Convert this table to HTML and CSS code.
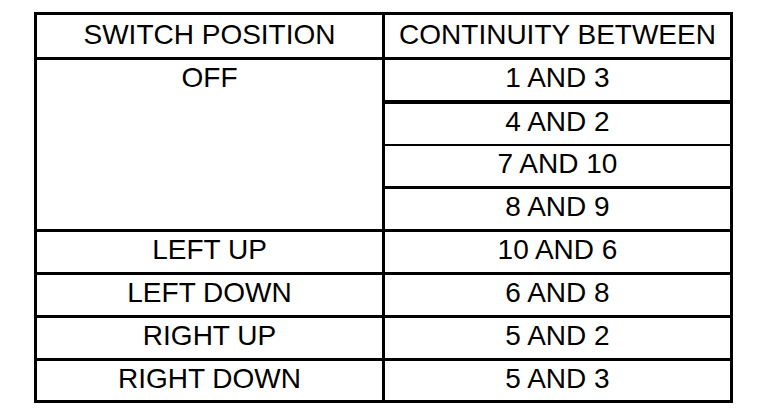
FILE: index.html
```html
<!DOCTYPE html>
<html>
<head>
<meta charset="utf-8">
<link rel="stylesheet" href="styles.css">
</head>
<body>
<div class="table">
  <div class="cell head">SWITCH POSITION</div>
  <div class="cell head">CONTINUITY BETWEEN</div>
  <div class="cell off"><div class="line">OFF</div></div>
  <div class="cell r1">1 AND 3</div>
  <div class="cell r2">4 AND 2</div>
  <div class="cell r3">7 AND 10</div>
  <div class="cell r4">8 AND 9</div>
  <div class="cell">LEFT UP</div>
  <div class="cell">10 AND 6</div>
  <div class="cell">LEFT DOWN</div>
  <div class="cell">6 AND 8</div>
  <div class="cell">RIGHT UP</div>
  <div class="cell">5 AND 2</div>
  <div class="cell">RIGHT DOWN</div>
  <div class="cell">5 AND 3</div>
</div>
</body>
</html>
```
FILE: styles.css
```css
html, body {
  margin: 0;
  padding: 0;
  background: #fff;
}
body {
  padding: 12px 0 0 34px;
  font-family: "Liberation Sans", Arial, sans-serif;
  font-size: 28px;
  color: #000;
}
.table {
  display: grid;
  width: 699px;
  box-sizing: border-box;
  grid-template-columns: 345px 345px;
  grid-template-rows: 42px 40px 41px 39px 40px 40px 40px 40px 39px;
  gap: 3px;
  padding: 3px;
  background: #000;
}
.cell {
  background: #fff;
  display: flex;
  align-items: center;
  justify-content: center;
  padding-bottom: 4px;
  box-sizing: border-box;
  line-height: 1;
  white-space: nowrap;
}
.head {
  padding-bottom: 3px;
}
.off {
  grid-row: span 4;
  align-items: flex-start;
  padding-bottom: 0;
}
.off .line {
  height: 40px;
  display: flex;
  align-items: center;
  padding-bottom: 4px;
  box-sizing: border-box;
}
.r2 { border-top: 1px solid #000; }
.r3 { margin-top: -1px; }
```
